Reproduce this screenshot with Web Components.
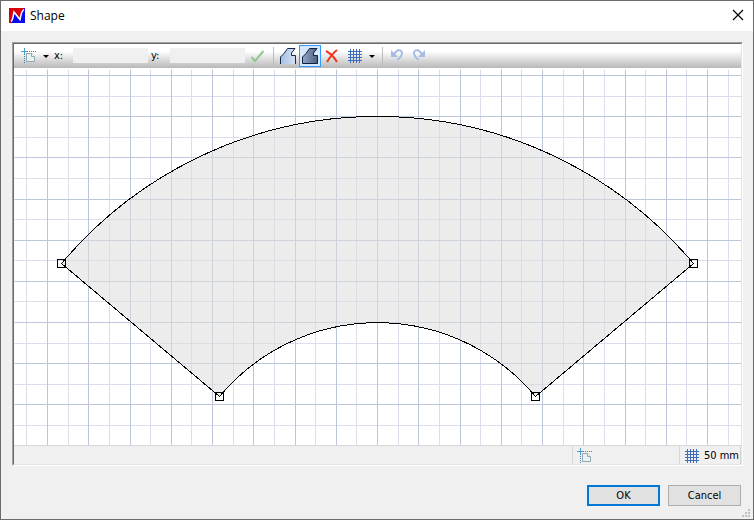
<!DOCTYPE html>
<html lang="en">
<head>
<meta charset="utf-8">
<title>Shape</title>
<style>
  html, body {
    margin: 0;
    height: 100%;
  }
  body {
    --small-font: 11px/16px "DejaVu Sans Condensed", "Open Sans", sans-serif;
    font: 12px/16px "Open Sans", "Noto Sans", sans-serif;
    color: #000;
    background: #f0f0f0;
  }
</style>
</head>
<body>

<dialog-window caption="Shape">
  <shape-editor>
    <editor-toolbar slot="toolbar"></editor-toolbar>
    <shape-canvas></shape-canvas>
    <status-bar slot="status" grid="50 mm"></status-bar>
  </shape-editor>
  <push-button slot="buttons" primary>OK</push-button>
  <push-button slot="buttons">Cancel</push-button>
</dialog-window>

<script>
const icons = {
  logo: `<path d="M0 0h16v15H0z" fill="#d8000c"/><path d="M2 15 5 5l6 7L14 1l2-1v15z" fill="#0a0af0"/>
    <path d="M2 13.500c2-1 2-5 3-9.500l6 7.500c1-4 1-8 4-10" fill="none" stroke="#fff" stroke-width="1.500"/>`,
  close: `<path d="m3 2 10 10M13 2 3 12" fill="none" stroke="#000" stroke-width="1.200"/>`,
  origin: `<path d="M6 3.500h9M3.500 6v9" fill="none" stroke="#4f7fa8" stroke-dasharray="1 1"/>
    <path d="M0 3.500h6M3.500 0v6" fill="none" stroke="#4c9ccc"/>
    <path d="M5.500 5.500h5l3 3v5h-8z" fill="#e8f3f1" stroke="#91aaaf"/><path d="M10.500 5.500v3h3" fill="#fff" stroke="#91aaaf"/>`,
  check: `<path d="m2.500 9 3.500 4L14.500 3" fill="none" stroke="#93c690" stroke-width="2"/>`,
  outline: `<defs><linearGradient id="sky"><stop stop-color="#a9c0e2"/><stop offset="1" stop-color="#d3e0f4"/></linearGradient></defs>
    <path d="M.500 16V9L4 5.500 7.500.500H15L11.500 5v2.500h4V16" fill="url(#sky)" stroke="#152a4a"/>`,
  filled: `<defs><linearGradient id="steel"><stop stop-color="#91a7c9"/><stop offset="1" stop-color="#4c5f80"/></linearGradient></defs>
    <path d="M.500 15.500V9L4 5.500 7.500.500H15L11.500 5v2.500h4v8z" fill="url(#steel)" stroke="#10203c"/>`,
  remove: `<path d="M2 3c4 2 8 6 11 11M13 2C9 5 6 9 3 14" fill="none" stroke="#ee3820" stroke-width="2"/>`,
  grid: `<path d="M1 3.500h14M1 6.500h14M1 9.500h14M1 12.500h14M3.500 1v14M6.500 1v14M9.500 1v14M12.500 1v14" fill="none" stroke="#3e6cb8"/>`,
  undo: `<path d="M5 7c2-6 8-6 8-2 0 3-2 5-5 7" fill="none" stroke="#a5bce4" stroke-width="2"/><path d="M2 2v7h7z" fill="#a5bce4"/>`,
  redo: `<path d="M11 7C9 1 3 1 3 5c0 3 2 5 5 7" fill="none" stroke="#a5bce4" stroke-width="2"/><path d="M14 2v7H7z" fill="#a5bce4"/>`
};

class ToolIcon extends HTMLElement {
  constructor() {
    super();
    this.attachShadow({ mode: "open" });
  }
  connectedCallback() {
    this.shadowRoot.innerHTML = `
      <style>
        :host { display: block; width: 16px; height: 16px; flex: none; }
        svg { display: block; }
      </style>
      <svg width="16" height="16" viewBox="0 0 16 16" aria-hidden="true">${icons[this.getAttribute("name")]}</svg>
    `;
  }
}

class DialogWindow extends HTMLElement {
  constructor() {
    super();
    this.attachShadow({ mode: "open" });
  }
  connectedCallback() {
    this.shadowRoot.innerHTML = `
      <style>
        :host {
          display: flex;
          flex-direction: column;
          box-sizing: border-box;
          min-height: 100vh;
          border: 1px solid #6b6b6b;
        }
        header {
          display: flex;
          align-items: center;
          gap: 5px;
          height: 30px;
          padding: 0 7px 0 8px;
          background: #fff;
        }
        h1 { flex: 1; margin: 0; font: inherit; }
        .close { padding: 0; border: 0; background: none; }
        main { display: flex; flex: 1; padding: 11px 10px 0 11px; }
        footer { display: flex; justify-content: flex-end; gap: 8px; padding: 19px 12px 13px; position: relative; }
        .grip { position: absolute; right: 3px; bottom: 2px; }
      </style>
      <header>
        <tool-icon name="logo"></tool-icon>
        <h1>${this.getAttribute("caption")}</h1>
        <button class="close" aria-label="Close"><tool-icon name="close"></tool-icon></button>
      </header>
      <main><slot></slot></main>
      <footer>
        <slot name="buttons"></slot>
        <svg class="grip" width="8" height="8" fill="#bfbfbf" aria-hidden="true">
          <path d="M6 0h2v2H6zM3 3h2v2H3zM6 3h2v2H6zM0 6h2v2H0zM3 6h2v2H3zM6 6h2v2H6z"/>
        </svg>
      </footer>
    `;
  }
}

class ShapeEditor extends HTMLElement {
  constructor() {
    super();
    this.attachShadow({ mode: "open" });
    this.shadowRoot.innerHTML = `
      <style>
        :host {
          display: flex;
          flex: 1;
          flex-direction: column;
          min-width: 0;
          border: 1px solid;
          border-color: #a0a0a0 #fff #fff #a0a0a0;
        }
        .inner {
          display: flex;
          flex: 1;
          flex-direction: column;
          border: 1px solid;
          border-color: #696969 #e3e3e3 #e3e3e3 #696969;
        }
      </style>
      <div class="inner">
        <slot name="toolbar"></slot>
        <slot></slot>
        <slot name="status"></slot>
      </div>
    `;
  }
}

class EditorToolbar extends HTMLElement {
  constructor() {
    super();
    this.attachShadow({ mode: "open" });
    this.shadowRoot.innerHTML = `
      <style>
        :host {
          display: flex;
          align-items: center;
          height: 24px;
          padding-left: 4px;
          font: var(--small-font);
          background: linear-gradient(#fff 0, #fff 30%, #b8b8b8);
        }
        button {
          display: flex;
          align-items: center;
          box-sizing: border-box;
          height: 22px;
          padding: 0 2px;
          border: 1px solid transparent;
          background: none;
        }
        button[aria-pressed="true"] { border-color: #3399ff; background: #d5e8fb; }
        .menu { gap: 6px; padding-right: 1px; }
        .menu::after {
          content: "";
          border: 3px solid transparent;
          border-top-color: #000;
          border-bottom: 0;
        }
        label { box-sizing: border-box; width: 22px; padding-left: 3px; }
        input {
          box-sizing: border-box;
          width: 75px;
          height: 15px;
          margin: 0 0 1px;
          padding: 0 2px;
          border: 0;
          font: inherit;
          background: #f0f0f0;
        }
        .spaced { margin-left: 1px; }
        hr { width: 1px; height: 18px; margin: 0 3px 0 5px; border: 0; background: #bdbdbd; }
      </style>
      <button class="menu" aria-label="Origin"><tool-icon name="origin"></tool-icon></button>
      <label for="x">x:</label><input id="x" type="text">
      <label for="y">y:</label><input id="y" type="text">
      <button class="spaced" aria-label="Apply"><tool-icon name="check"></tool-icon></button>
      <hr>
      <button aria-label="Open shape"><tool-icon name="outline"></tool-icon></button>
      <button aria-label="Closed shape" aria-pressed="true"><tool-icon name="filled"></tool-icon></button>
      <button aria-label="Delete"><tool-icon name="remove"></tool-icon></button>
      <button class="menu spaced" aria-label="Grid"><tool-icon name="grid"></tool-icon></button>
      <hr>
      <button aria-label="Undo"><tool-icon name="undo"></tool-icon></button>
      <button aria-label="Redo"><tool-icon name="redo"></tool-icon></button>
    `;
  }
}

class ShapeCanvas extends HTMLElement {
  constructor() {
    super();
    this.attachShadow({ mode: "open" });
    // enough lines to fill large windows, the svg clips the rest
    const lines = (first, step, draw) =>
      Array.from({ length: 80 }, (_, i) => draw(Math.round(first + i * step))).join("");
    const column = x => `M${x} 1v3000`;
    const row = y => `M0 ${y}h3000`;
    const handles = [[47, 195], [679, 195], [521, 328], [205, 328]];
    this.shadowRoot.innerHTML = `
      <style>
        :host { display: flex; flex: 1; min-width: 0; background: #fff; }
        svg { display: block; flex: 1; min-width: 0; min-height: 377px; }
      </style>
      <svg role="img" aria-label="Shape outline">
        <g transform="translate(.5 .5)" fill="none">
          <path stroke="#dcdcea" d="${lines(12.4, 41.25, column)}${lines(27.9, 41.1, row)}"/>
          <path stroke="#bcc5da" d="${lines(33, 41.25, column)}${lines(7.1, 41.15, row)}"/>
          <path d="M47 195A413 413 0 0 1 679 195L521 328A206 206 0 0 0 205 328Z"
            fill="#dcdcdc" fill-opacity=".55" stroke="#000" shape-rendering="crispEdges"/>
          ${handles.map(([x, y]) => `<rect x="${x - 4}" y="${y - 4}" width="8" height="8" stroke="#000"/>`).join("")}
        </g>
      </svg>
    `;
  }
}

class StatusBar extends HTMLElement {
  constructor() {
    super();
    this.attachShadow({ mode: "open" });
  }
  connectedCallback() {
    this.shadowRoot.innerHTML = `
      <style>
        :host {
          display: flex;
          justify-content: flex-end;
          height: 18px;
          border-top: 1px solid #d7d7d7;
          font: var(--small-font);
        }
        div {
          display: flex;
          align-items: center;
          gap: 4px;
          box-sizing: border-box;
          padding: 2px 0 0 4px;
          border-left: 1px solid #d7d7d7;
          white-space: nowrap;
        }
        .origin { width: 107px; }
        .grid { width: 62px; border-right: 1px solid #d7d7d7; }
      </style>
      <div class="origin"><tool-icon name="origin"></tool-icon></div>
      <div class="grid"><tool-icon name="grid"></tool-icon>${this.getAttribute("grid")}</div>
    `;
  }
}

class PushButton extends HTMLElement {
  constructor() {
    super();
    this.attachShadow({ mode: "open" });
    this.shadowRoot.innerHTML = `
      <style>
        :host { display: block; }
        button {
          display: block;
          box-sizing: border-box;
          width: 73px;
          height: 21px;
          padding: 0;
          border: 1px solid #adadad;
          font: var(--small-font);
          background: #e1e1e1;
        }
        :host([primary]) button { border: 2px solid #0078d7; }
      </style>
      <button><slot></slot></button>
    `;
  }
}

customElements.define("tool-icon", ToolIcon);
customElements.define("dialog-window", DialogWindow);
customElements.define("shape-editor", ShapeEditor);
customElements.define("editor-toolbar", EditorToolbar);
customElements.define("shape-canvas", ShapeCanvas);
customElements.define("status-bar", StatusBar);
customElements.define("push-button", PushButton);
</script>
</body>
</html>
